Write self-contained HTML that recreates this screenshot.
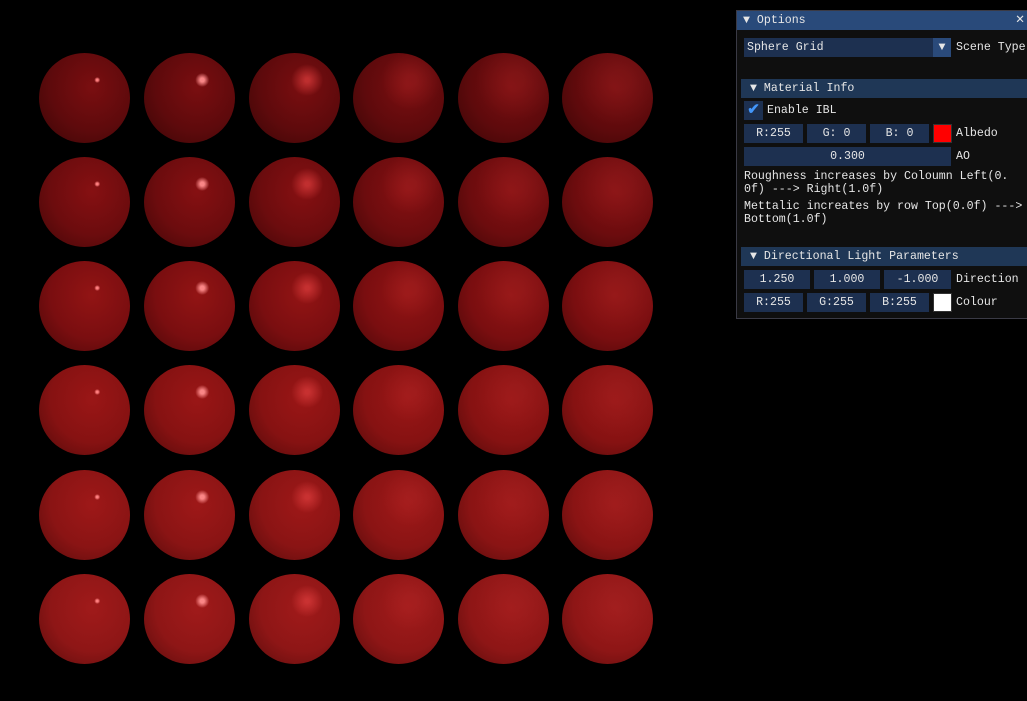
<!DOCTYPE html>
<html><head><meta charset="utf-8"><style>
*{margin:0;padding:0;box-sizing:border-box}
body{width:1027px;height:701px;background:#000;position:relative;overflow:hidden;font-family:"Liberation Mono",monospace;font-size:11.6px;color:#e6e6e6}
.s{position:absolute;width:91px;height:90px;border-radius:50%;
background:radial-gradient(circle at 64% 30%,var(--h) 0,var(--h) var(--hs),rgba(0,0,0,0) var(--hf)),
radial-gradient(ellipse at 58% 38%,var(--c1) 0%,var(--c2) 55%,var(--c3) 100%);}
.r0{--c1:#7a0e10;--c2:#5e0a0c;--c3:#3a0606}
.r1{--c1:#861012;--c2:#6c0c0e;--c3:#420707}
.r2{--c1:#921414;--c2:#7a0e10;--c3:#4a0808}
.r3{--c1:#9a1616;--c2:#861212;--c3:#520a0a}
.r4{--c1:#9e1818;--c2:#8a1414;--c3:#560b0b}
.r5{--c1:#a01a1a;--c2:#8e1616;--c3:#5a0c0c}
.k0{--h:#ff8080;--hs:1px;--hf:3px}
.k1{--h:rgba(255,140,140,.95);--hs:2px;--hf:7px}
.k2{--h:rgba(220,60,60,.7);--hs:2px;--hf:16px}
.k3{--h:rgba(180,40,40,.35);--hs:5px;--hf:30px}
.k4{--h:rgba(170,40,40,.25);--hs:8px;--hf:40px}
.k5{--h:rgba(170,45,45,.2);--hs:10px;--hf:45px}
.p{position:absolute;left:736px;top:10px;width:291px;height:309px;background:#0f0f0f;border:1px solid #3a3a45;border-right:none;white-space:nowrap}
.t{position:absolute;left:0;top:0;width:100%;height:19px;background:#294a7a;padding-left:6px;line-height:19px}
.a{position:absolute}
.f{position:absolute;background:#1d3050;height:19px;line-height:19px;text-align:center}
.h{position:absolute;left:4px;width:287px;height:19px;background:#1f3756;line-height:19px;padding-left:9px}
.l{position:absolute;line-height:19px;white-space:nowrap}
</style></head><body>
<div class="s r0 k0" style="left:39px;top:53px"></div><div class="s r0 k1" style="left:144px;top:53px"></div><div class="s r0 k2" style="left:249px;top:53px"></div><div class="s r0 k3" style="left:353px;top:53px"></div><div class="s r0 k4" style="left:458px;top:53px"></div><div class="s r0 k5" style="left:562px;top:53px"></div>
<div class="s r1 k0" style="left:39px;top:157px"></div><div class="s r1 k1" style="left:144px;top:157px"></div><div class="s r1 k2" style="left:249px;top:157px"></div><div class="s r1 k3" style="left:353px;top:157px"></div><div class="s r1 k4" style="left:458px;top:157px"></div><div class="s r1 k5" style="left:562px;top:157px"></div>
<div class="s r2 k0" style="left:39px;top:261px"></div><div class="s r2 k1" style="left:144px;top:261px"></div><div class="s r2 k2" style="left:249px;top:261px"></div><div class="s r2 k3" style="left:353px;top:261px"></div><div class="s r2 k4" style="left:458px;top:261px"></div><div class="s r2 k5" style="left:562px;top:261px"></div>
<div class="s r3 k0" style="left:39px;top:365px"></div><div class="s r3 k1" style="left:144px;top:365px"></div><div class="s r3 k2" style="left:249px;top:365px"></div><div class="s r3 k3" style="left:353px;top:365px"></div><div class="s r3 k4" style="left:458px;top:365px"></div><div class="s r3 k5" style="left:562px;top:365px"></div>
<div class="s r4 k0" style="left:39px;top:470px"></div><div class="s r4 k1" style="left:144px;top:470px"></div><div class="s r4 k2" style="left:249px;top:470px"></div><div class="s r4 k3" style="left:353px;top:470px"></div><div class="s r4 k4" style="left:458px;top:470px"></div><div class="s r4 k5" style="left:562px;top:470px"></div>
<div class="s r5 k0" style="left:39px;top:574px"></div><div class="s r5 k1" style="left:144px;top:574px"></div><div class="s r5 k2" style="left:249px;top:574px"></div><div class="s r5 k3" style="left:353px;top:574px"></div><div class="s r5 k4" style="left:458px;top:574px"></div><div class="s r5 k5" style="left:562px;top:574px"></div>

<div class="p">
<div class="t">▼ Options<span style="position:absolute;right:2px;top:0">✕</span></div>
<div class="f" style="left:7px;top:27px;width:189px;text-align:left;padding-left:3px;background:#1d3050">Sphere Grid</div>
<div class="f" style="left:196px;top:27px;width:18px;background:#2a4a7a">▼</div>
<div class="l" style="left:219px;top:27px">Scene Type</div>
<div class="h" style="top:68px">▼ Material Info</div>
<div class="f" style="left:7px;top:90px;width:19px;color:#4296fa;font-size:15px;font-weight:bold">✔</div>
<div class="l" style="left:30px;top:90px">Enable IBL</div>
<div class="f" style="left:7px;top:113px;width:59px">R:255</div>
<div class="f" style="left:70px;top:113px;width:59px">G:  0</div>
<div class="f" style="left:133px;top:113px;width:59px">B:  0</div>
<div class="a" style="left:196px;top:113px;width:19px;height:19px;background:#f00;border:1px solid #333"></div>
<div class="l" style="left:219px;top:113px">Albedo</div>
<div class="f" style="left:7px;top:136px;width:207px">0.300</div>
<div class="l" style="left:219px;top:136px">AO</div>
<div class="l" style="left:7px;top:159px;line-height:13px">Roughness increases by Coloumn Left(0.<br>0f) ---&gt; Right(1.0f)</div>
<div class="l" style="left:7px;top:189px;line-height:13px">Mettalic increates by row Top(0.0f) ---&gt;<br>Bottom(1.0f)</div>
<div class="h" style="top:236px">▼ Directional Light Parameters</div>
<div class="f" style="left:7px;top:259px;width:66px">1.250</div>
<div class="f" style="left:77px;top:259px;width:66px">1.000</div>
<div class="f" style="left:147px;top:259px;width:67px">-1.000</div>
<div class="l" style="left:219px;top:259px">Direction</div>
<div class="f" style="left:7px;top:282px;width:59px">R:255</div>
<div class="f" style="left:70px;top:282px;width:59px">G:255</div>
<div class="f" style="left:133px;top:282px;width:59px">B:255</div>
<div class="a" style="left:196px;top:282px;width:19px;height:19px;background:#fff;border:1px solid #333"></div>
<div class="l" style="left:219px;top:282px">Colour</div>
</div>
</body></html>
